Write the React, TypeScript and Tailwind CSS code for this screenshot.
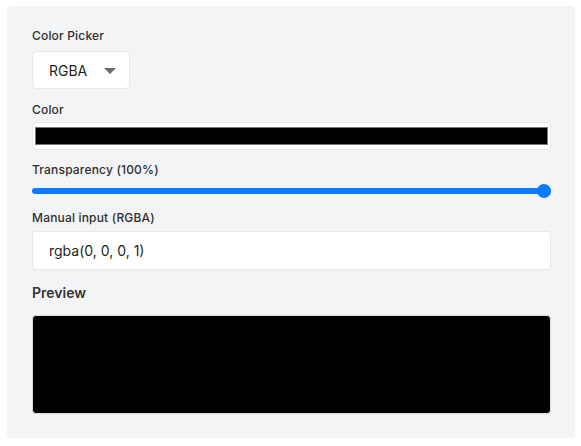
export default function App() {
  const alpha = 1;
  const labelCls = "block text-[12px] leading-4 font-medium tracking-[0.015em] text-[#2e2e2e]";
  return (
    <div className="min-h-screen bg-white pt-[6px] pl-[7px] pr-[6px] font-['Inter',sans-serif]">
      <div className="w-[568px] rounded bg-[#f3f4f6] px-[25px] pt-[22px] pb-6">
        <label className={labelCls}>Color Picker</label>
        <div className="mt-[7px] flex h-[38px] w-[98px] items-center justify-between rounded-[5px] border border-[#e8e8ea] bg-white pl-4 pr-[13px]">
          <span className="text-[14px] text-[#1f1f1f]">RGBA</span>
          <svg width="12" height="6" viewBox="0 0 12 6" className="mt-px">
            <path d="M0 0h12L6 6z" fill="#6b6b6b" />
          </svg>
        </div>

        <label className={"mt-[13px] " + labelCls}>Color</label>
        <div className="mt-1 flex h-[28px] w-[519px] items-center rounded-[4px] border border-[#e8e8ea] bg-white px-[2px]">
          <div className="h-[18px] w-full border border-[#767676] bg-black" />
        </div>

        <label className={"mt-3 " + labelCls}>
          Transparency ({Math.round(alpha * 100)}%)
        </label>
        <div className="relative mt-[6px] flex h-[14px] w-[519px] items-center">
          <div className="h-[6px] w-full rounded-full bg-[#0a7aff]" />
          <div className="absolute right-0 top-0 h-[14px] w-[14px] rounded-full bg-[#0a7aff]" />
        </div>

        <label className={"mt-3 " + labelCls}>Manual input (RGBA)</label>
        <div className="mt-[5px] flex h-[39px] w-[519px] items-center rounded-[4px] border border-[#e8e8ea] bg-white pl-4">
          <span className="text-[14px] text-[#1f1f1f]">rgba(0, 0, 0, 1)</span>
        </div>

        <h3 className="mt-[13px] text-[14px] leading-5 font-semibold text-[#333333]">Preview</h3>
        <div className="mt-3 h-[99px] w-[519px] rounded-[4px] border border-[#d9d9d9] bg-black" />
      </div>
    </div>
  );
}
